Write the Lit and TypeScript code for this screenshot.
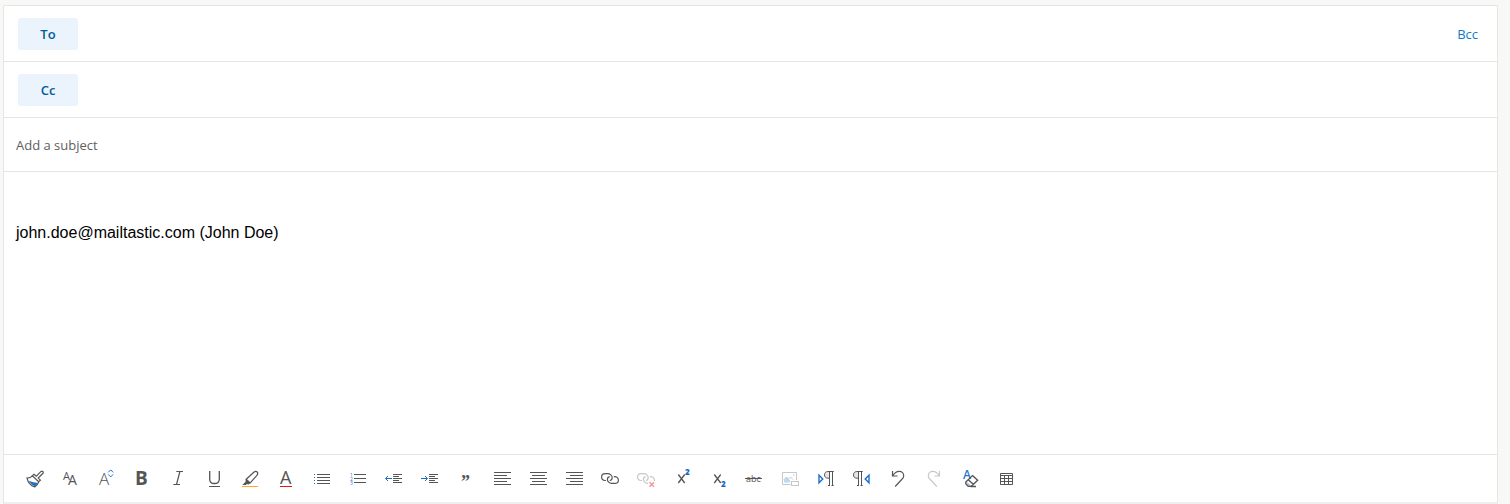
import { LitElement, html, svg, css, SVGTemplateResult } from "lit";
import { customElement, property, state } from "lit/decorators.js";

interface Tool {
  label: string;
  icon: SVGTemplateResult;
  disabled?: boolean;
}

const rule = (y: number, x1: number, x2: number) =>
  svg`<rect class="ink" x=${x1} y=${y} width=${x2 - x1} height="1"/>`;

const links = svg`
  <path d="M7 13.500H6.200C4.200 13.500 2.600 12 2.600 10.100S4.200 6.700 6.200 6.700H8.800c2.200 0 4.400 1.900 4.400 4 0 1.500-.9 2.500-2.400 2.800"/>
  <path d="M10.700 9.700C9.200 10 8.400 11 8.400 12.400c0 2.100 2 4 4.200 4h3.200c2 0 3.600-1.400 3.600-3.200S17.700 9.600 15.500 9.600H14.800"/>`;

const pilcrow = (x: number) => svg`
  <g transform="translate(${x} 0)">
    <path class="fill" d="M5 4.500H3.600C1.600 4.500.3 5.900.3 7.800s1.300 3.400 3.300 3.400H5z" fill-opacity=".15"/>
    <path d="M9.800 4.500H3.800C1.900 4.500.5 5.900.5 7.900s1.400 3.300 3.300 3.300H5M5.500 4.500V19M8.500 4.500V19M4 18.500h2M7.500 18.500h2.200"/>
  </g>`;

const tools: Tool[] = [
  {
    label: "Format painter",
    icon: svg`
      <path d="M11 7.200 13.300 9.200 18 4.400c1.300-1 2.900.6 2 1.900L15.200 11l2.200 2.200-1.800 1.600L9.300 8.700z" stroke-width="1.200"/>
      <path d="M9.500 8.900C8.200 10.400 6.300 11 4 11.100c.9 4 3.700 7.500 7.800 8.800 1.800-1.200 3.200-3 4-5.100" stroke-width="1.200"/>
      <path class="bluefill" d="M5.800 13.700c2.700 1.400 6 1.700 8.700 2.200-.6 1.300-1.500 2.500-2.700 3.300C9.200 18.300 7.200 16.200 5.800 13.700z"/>`,
  },
  {
    label: "Font",
    icon: svg`<text x="4" y="13" font-size="11">A</text><text x="9" y="18" font-size="14">A</text>`,
  },
  {
    label: "Font size",
    icon: svg`<text class="light" x="4" y="18" font-size="17">A</text>
      <path class="blue" d="M13.200 5.400 15.700 2.900 18.200 5.400M13.200 7.400 15.700 9.900 18.200 7.400"/>`,
  },
  { label: "Bold", icon: svg`<text class="bold" x="4" y="18" font-size="19">B</text>` },
  {
    label: "Italic",
    icon: svg`<path d="M9.300 4.500h6.700M6.300 17.500h6.700M12.900 4.500 9.500 17.500" stroke-width="1.200"/>`,
  },
  {
    label: "Underline",
    icon: svg`<path d="M6.700 4v7.900c0 3 1.600 4.600 4.700 4.600s4.900-1.600 4.900-4.600V4" stroke-width="1.300"/>${rule(19, 6, 17)}`,
  },
  {
    label: "Highlight",
    icon: svg`<path d="M7.200 12.300 14.800 5.300C16.100 4.200 17.500 4.300 18.200 5c.8.900.7 2.100-.3 3.400L11.200 15.900z" stroke-width="1.200"/>
      <path class="fill" d="M6.800 12 11.500 16 9.700 17.500 7.800 17 6.900 18H3.300L6.400 15z"/>
      <rect class="amber" x="3" y="19" width="16" height="1"/>`,
  },
  {
    label: "Font color",
    icon: svg`<text x="5" y="17" font-size="18">A</text><rect class="red" x="5" y="19" width="12" height="1"/>`,
  },
  {
    label: "Bullets",
    icon: svg`${[7, 10, 13, 16].map((y) => svg`<rect class="bluefill" x="3" y=${y} width="1" height="1"/>${rule(y, 6, 19)}`)}`,
  },
  {
    label: "Numbering",
    icon: svg`${[7, 11, 15].map((y, i) => svg`<text class="digit" x="3" y=${y + 3} font-size="5">${i + 1}</text>${rule(y, 7, 19)}`)}`,
  },
  {
    label: "Decrease indent",
    icon: svg`<path class="blue" d="M9 11.500H2.600M5 9 2.500 11.500 5 14"/>
      ${[7, 9, 11, 13, 15].map((y, i) => rule(y, 10, i % 2 ? 16 : 19))}`,
  },
  {
    label: "Increase indent",
    icon: svg`<path class="blue" d="M2 11.500H8.400M6 9 8.500 11.500 6 14"/>
      ${[7, 9, 11, 13, 15].map((y, i) => rule(y, 10, i % 2 ? 16 : 19))}`,
  },
  {
    label: "Quote",
    icon: svg`<text class="quote" x="6" y="21" font-size="18">”</text>`,
  },
  { label: "Align left", icon: svg`${[5, 8, 11, 14, 17].map((y, i) => rule(y, 3, i % 2 ? 16 : 20))}` },
  { label: "Align center", icon: svg`${[5, 8, 11, 14, 17].map((y, i) => rule(y, i % 2 ? 5 : 3, i % 2 ? 18 : 20))}` },
  { label: "Align right", icon: svg`${[5, 8, 11, 14, 17].map((y, i) => rule(y, i % 2 ? 7 : 3, 20))}` },
  { label: "Insert link", icon: svg`<g stroke-width="1.200">${links}</g>` },
  {
    label: "Remove link",
    disabled: true,
    icon: svg`<g stroke-width="1.200">${links}</g>
      <rect class="paper" x="13" y="14" width="8" height="7"/>
      <path class="pink" d="M14.500 15.300 19 19.700M19 15.300 14.500 19.700"/>`,
  },
  {
    label: "Superscript",
    icon: svg`<path d="M7.300 7.500 13.700 16M13.700 7.500 7.300 16" stroke-width="1.300"/><text class="script" x="14" y="8" font-size="8">2</text>`,
  },
  {
    label: "Subscript",
    icon: svg`<path d="M7.300 7.500 13.700 16M13.700 7.500 7.300 16" stroke-width="1.300"/><text class="script" x="14" y="20" font-size="8">2</text>`,
  },
  {
    label: "Strikethrough",
    icon: svg`<text x="3" y="15" font-size="9">abc</text>${rule(11, 2, 19)}`,
  },
  {
    label: "Insert picture",
    disabled: true,
    icon: svg`<path class="sky" d="M5 15.500V13l2.500-3 4 5.500z"/>
      <path d="M11.500 17.500h-8v-12h14v7.500M5 12.500 7.500 10l3.500 4.500M9.500 12l2-2 2.500 2.500M14 8h1.500"/>
      <rect x="12.500" y="14.500" width="7" height="4"/>`,
  },
  {
    label: "Left-to-right",
    icon: svg`<path class="blue" d="M4 8.200v7.600L7.800 12z" stroke-width="1.400"/>${pilcrow(9)}`,
  },
  {
    label: "Right-to-left",
    icon: svg`${pilcrow(2)}<path class="blue" d="M18 8.200v7.600L14.200 12z" stroke-width="1.400"/>`,
  },
  {
    label: "Undo",
    icon: svg`<path d="M5.500 4v5h5M5.700 8.800C7.300 6.200 9.500 4.400 12.200 4.400c2.700 0 4.500 2 4.500 4.300 0 1.600-.7 2.600-1.800 3.600L8.200 19.500" stroke-width="1.200"/>`,
  },
  {
    label: "Redo",
    disabled: true,
    icon: svg`<path d="M16.500 4v5h-5M16.300 8.800C14.700 6.200 12.500 4.400 9.800 4.400c-2.700 0-4.500 2-4.500 4.300 0 1.600.7 2.600 1.800 3.600L13.800 19.500" stroke-width="1.200"/>`,
  },
  {
    label: "Clear formatting",
    icon: svg`<text class="bluetext" x="4" y="12" font-size="12">A</text>
      <path d="M13.500 8.600 18.600 13.300 12.300 19.200H9.200L6.800 16.800V15zM9.200 12.700 14.300 17.300M11.500 19.500H17" stroke-width="1.400"/>
      <path class="skyline" d="M8 15.500 10.500 18"/>`,
  },
  {
    label: "Insert table",
    icon: svg`<path d="M5.500 6.500h12v11h-12zM5 8.500h13M5 11.500h13M5 14.500h13M9.500 8v10M13.500 8v10"/>`,
  },
];

@customElement("recipient-row")
export class RecipientRow extends LitElement {
  @property() name = "";
  @property({ type: Boolean }) bcc = false;

  static styles = css`
    :host {
      display: flex;
      align-items: center;
      gap: 12px;
      padding: 12px 19px 11px 14px;
      border-bottom: 1px solid #e5e5e5;
    }
    button {
      font: inherit;
      border: 0;
      cursor: pointer;
    }
    .pick {
      width: 60px;
      height: 32px;
      padding: 0;
      border-radius: 2px;
      background: #ebf4fc;
      color: #005a9e;
      font-weight: 600;
    }
    .bcc {
      padding: 0;
      background: none;
      color: #0f78d0;
    }
    input {
      flex: 1;
      min-width: 0;
      border: 0;
      outline: 0;
      font: inherit;
      background: none;
    }
  `;

  render() {
    return html`
      <button class="pick" type="button">${this.name}</button>
      <input type="text" aria-label=${this.name} />
      ${this.bcc ? html`<button class="bcc" type="button">Bcc</button>` : null}
    `;
  }
}

@customElement("format-bar")
export class FormatBar extends LitElement {
  static styles = css`
    :host {
      display: flex;
      flex-wrap: wrap;
      padding: 12px 13px 11px;
      border-top: 1px solid #e5e5e5;
    }
    button {
      display: flex;
      justify-content: center;
      width: 36px;
      height: 24px;
      padding: 0;
      border: 0;
      background: none;
      color: #555;
      cursor: pointer;
    }
    button:disabled {
      color: #c8c8c8;
      cursor: default;
    }
    svg {
      width: 24px;
      height: 24px;
      overflow: visible;
      fill: none;
      stroke: currentColor;
    }
    text {
      fill: currentColor;
      stroke: none;
      font-family: "Open Sans", "Noto Sans", sans-serif;
    }
    .light { font-weight: 300; }
    .bold { font-weight: 700; }
    .quote {
      font-family: "Liberation Serif", serif;
      font-weight: 700;
    }
    .digit { fill: #2b79cc; }
    .script { fill: #1b68c0; font-weight: 800; }
    .bluetext { fill: #2b79cc; font-weight: 600; }
    .ink, .fill { fill: currentColor; stroke: none; }
    .blue { stroke: #1f6fc2; }
    .bluefill { fill: #1f6fc2; stroke: none; }
    .amber { fill: #ffa820; stroke: none; }
    .red { fill: #e81410; stroke: none; }
    .pink { stroke: #ee9a95; stroke-width: 1.500; }
    .paper { fill: #fff; stroke: none; }
    .sky { fill: #b8daf5; stroke: none; }
    .skyline { stroke: #5ea5e6; }
  `;

  render() {
    return tools.map(
      (t) => html`<button type="button" aria-label=${t.label} ?disabled=${t.disabled}>
        <svg viewBox="0 0 24 24" aria-hidden="true">${t.icon}</svg>
      </button>`
    );
  }
}

@customElement("app-root")
export class AppRoot extends LitElement {
  @state() private message = "john.doe@mailtastic.com (John Doe)";

  static styles = css`
    :host {
      display: flex;
      flex-direction: column;
      box-sizing: border-box;
      min-height: 100vh;
      padding: 5px 12px 0 3px;
      background: #f8f8f7;
      font: 13px/18px "Open Sans", "Noto Sans", sans-serif;
    }
    .compose {
      flex: 1;
      display: flex;
      flex-direction: column;
      border: 1px solid #e5e5e5;
      border-bottom: 2px solid #efefef;
      border-radius: 2px 2px 0 0;
      background: #fff;
    }
    input,
    textarea {
      border: 0;
      outline: 0;
      margin: 0;
      background: none;
    }
    .subject {
      padding: 18px 12px 17px;
      font: inherit;
      border-bottom: 1px solid #e5e5e5;
    }
    .subject::placeholder {
      color: #605e5c;
      opacity: 1;
    }
    .body {
      flex: 1;
      resize: none;
      padding: 51px 12px 12px;
      font: 16px/20px "Liberation Sans", Arial, sans-serif;
      color: #000;
    }
  `;

  render() {
    return html`
      <main class="compose">
        <recipient-row name="To" bcc></recipient-row>
        <recipient-row name="Cc"></recipient-row>
        <input class="subject" type="text" placeholder="Add a subject" aria-label="Add a subject" />
        <textarea
          class="body"
          aria-label="Message body"
          .value=${this.message}
          @input=${(e: Event) => (this.message = (e.target as HTMLTextAreaElement).value)}
        ></textarea>
        <format-bar role="toolbar" aria-label="Formatting options"></format-bar>
      </main>
    `;
  }
}
